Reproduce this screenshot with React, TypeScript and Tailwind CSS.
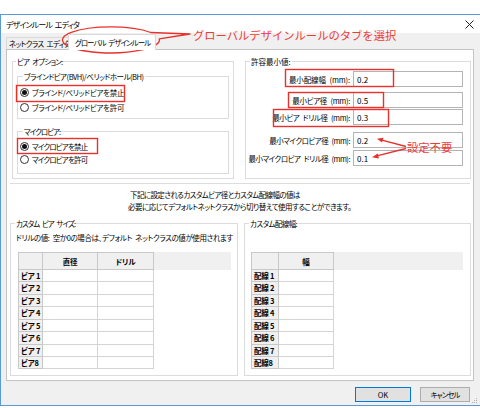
import React from "react";

const RED = "#e8312b";

function Radio({ checked, label, tr }: { checked?: boolean; label: string; tr: string }) {
  return (
    <div className="flex items-center gap-[3px] ml-[2px]">
      <span className="w-[9px] h-[9px] rounded-full border border-[#333] bg-white flex items-center justify-center">
        {checked && <span className="w-[5px] h-[5px] rounded-full bg-[#111]" />}
      </span>
      <span className={tr}>{label}</span>
    </div>
  );
}

function InputRow({ label, value, mt, tr }: { label: string; value: string; mt: string; tr: string }) {
  return (
    <div className={`flex items-center justify-end pr-[7px] ${mt}`}>
      <span className={`mr-[3px] ${tr}`}>{label}</span>
      <div className="w-[110px] h-[16px] border border-[#b4b4b4] bg-white flex items-center pl-[3px] tracking-normal text-[8px]">
        {value}
      </div>
    </div>
  );
}

const rowHeights = ["h-[12px]", "h-[13px]", "h-[12px]", "h-[13px]", "h-[12px]", "h-[13px]", "h-[12px]", "h-[12px]"];

function Grid({
  rowLabels,
  cols,
  rowW,
  colWs,
  extW,
}: {
  rowLabels: string[];
  cols: string[];
  rowW: string;
  colWs: string[];
  extW: string;
}) {
  return (
    <div className="flex flex-col text-[7.5px] font-bold tracking-[-0.2px] [word-spacing:0px]">
      <div className="flex h-[18px]">
        <div className={`${rowW} h-full bg-[#f0f0f0] border border-[#c8c8c8]`} />
        {cols.map((c, i) => (
          <div
            key={c}
            className={`${colWs[i]} h-full bg-[#f0f0f0] border-t border-r border-b border-[#c8c8c8] flex items-center justify-center`}
          >
            {c}
          </div>
        ))}
        <div className={`${extW} h-full bg-[#f0f0f0]`} />
      </div>
      {rowLabels.map((r, ri) => (
        <div key={r} className={`flex ${rowHeights[ri]}`}>
          <div
            className={`${rowW} h-full bg-[#f0f0f0] border-l border-r border-b border-[#c8c8c8] flex items-center pl-[2px] leading-none overflow-hidden`}
          >
            {r}
          </div>
          {cols.map((c, i) => (
            <div key={c} className={`${colWs[i]} h-full bg-white border-r border-b border-[#d4d4d4]`} />
          ))}
        </div>
      ))}
    </div>
  );
}

export default function App() {
  return (
    <div className="relative w-[480px] h-[408px] bg-white overflow-hidden whitespace-nowrap text-black text-[7.5px] leading-[11px] tracking-[-0.4px] [word-spacing:2px] font-['Noto_Sans_CJK_JP',sans-serif] [font-feature-settings:'palt']">
      <div className="h-[14px]" />
      <div className="h-[392px] border-t border-l border-b border-[#5b9bd5] bg-[#f0f0f0] flex flex-col">
        {/* title bar */}
        <div className="h-[18px] bg-white flex items-center justify-between pl-[5px] pr-[6px]">
          <span className="text-[8px] tracking-[-0.9px]">デザインルール エディタ</span>
          <svg width="9" height="9" viewBox="0 0 9 9">
            <path d="M0.5 0.5 L8.5 8.5 M8.5 0.5 L0.5 8.5" stroke="#222" strokeWidth="1" />
          </svg>
        </div>
        {/* tabs */}
        <div className="h-[16px] flex items-end pl-[5px]">
          <div className="w-[62px] h-[12px] bg-[#f0f0f0] border-t border-l border-[#d9d9d9] flex items-center pl-[2px] tracking-[-0.7px]">
            ネットクラス エディタ
          </div>
          <div className="relative z-10 -mb-[1px] w-[88px] h-[16px] bg-white border-t border-l border-r border-[#d9d9d9] flex items-center pl-[6px] tracking-[-1px]">
            グローバル デザインルール
          </div>
        </div>
        {/* panel */}
        <div className="ml-[5px] w-[468px] h-[332px] bg-white border border-[#c4c4c4] flex flex-col">
          {/* top section */}
          <div className="h-[133px] flex pt-[11px] pl-[5px] gap-[11px]">
            {/* via options */}
            <div className="w-[222px] h-[118px] border border-[#dcdcdc] flex flex-col">
              <div className="-mt-[6px] ml-[3px] px-[1px] bg-white w-fit h-[11px] tracking-[-0.8px]">ビア オプション:</div>
              <div className="mt-[9px] ml-[4px] w-[212px] h-[43px] border border-[#dcdcdc] flex flex-col">
                <div className="-mt-[6px] ml-[5px] px-[1px] bg-white w-fit h-[11px] tracking-[-0.5px]">
                  ブラインドビア(BVH)/ベリッドホール(BH)
                </div>
                <div className="mt-[3px] h-[15px] flex items-center">
                  <Radio checked label="ブラインド/ベリッドビアを禁止" tr="tracking-[-0.3px]" />
                </div>
                <div className="h-[15px] flex items-center">
                  <Radio label="ブラインド/ベリッドビアを許可" tr="tracking-[-0.3px]" />
                </div>
              </div>
              <div className="mt-[12px] ml-[4px] w-[212px] h-[43px] border border-[#dcdcdc] flex flex-col">
                <div className="-mt-[6px] ml-[5px] px-[1px] bg-white w-fit h-[11px] tracking-[-1px]">マイクロビア:</div>
                <div className="mt-[3px] h-[13px] flex items-center">
                  <Radio checked label="マイクロビアを禁止" tr="tracking-[-0.85px]" />
                </div>
                <div className="h-[13px] flex items-center">
                  <Radio label="マイクロビアを許可" tr="tracking-[-0.85px]" />
                </div>
              </div>
            </div>
            {/* min values */}
            <div className="w-[226px] h-[118px] border border-[#dcdcdc] flex flex-col">
              <div className="-mt-[6px] ml-[4px] px-[1px] bg-white w-fit h-[11px] tracking-normal">許容最小値:</div>
              <InputRow label="最小配線幅 (mm):" value="0.2" mt="mt-[4px]" tr="tracking-[-0.1px]" />
              <InputRow label="最小ビア径 (mm):" value="0.5" mt="mt-[5px]" tr="tracking-[-0.3px]" />
              <InputRow label="最小ビア ドリル径 (mm):" value="0.3" mt="mt-[1px]" tr="tracking-[-0.4px]" />
              <InputRow label="最小マイクロビア径 (mm):" value="0.2" mt="mt-[7px]" tr="tracking-[-0.5px]" />
              <InputRow label="最小マイクロビア ドリル径 (mm):" value="0.1" mt="mt-[2px]" tr="tracking-[-0.5px]" />
            </div>
          </div>
          <div className="mx-[3px] border-t border-[#dcdcdc]" />
          {/* description */}
          <div className="pt-[5px] pl-[121px] leading-[12px]">
            <div className="tracking-[-0.6px] pl-[2px]">下記に設定されるカスタムビア径とカスタム配線幅の値は</div>
            <div className="tracking-[-0.5px]">必要に応じてデフォルトネットクラスから切り替えて使用することができます。</div>
          </div>
          {/* bottom boxes */}
          <div className="mt-[10px] ml-[3px] flex gap-[6px]">
            <div className="w-[228px] h-[153px] border border-[#dcdcdc] flex flex-col">
              <div className="-mt-[6px] ml-[4px] px-[1px] bg-white w-fit h-[11px] tracking-[-1px]">カスタム ビア サイズ:</div>
              <div className="mt-[3px] ml-[5px] leading-[12px] tracking-[-0.4px]">
                ドリルの値: 空か0の場合は、デフォルト ネットクラスの値が使用されます
              </div>
              <div className="mt-[8px] ml-[7px]">
                <Grid
                  rowLabels={["ビア 1", "ビア 2", "ビア 3", "ビア 4", "ビア 5", "ビア 6", "ビア 7", "ビア8"]}
                  cols={["直径", "ドリル"]}
                  rowW="w-[25px]"
                  colWs={["w-[55px]", "w-[56px]"]}
                  extW="w-[77px]"
                />
              </div>
            </div>
            <div className="w-[227px] h-[153px] border border-[#dcdcdc] flex flex-col">
              <div className="-mt-[6px] ml-[4px] px-[1px] bg-white w-fit h-[11px] tracking-[-0.6px]">カスタム配線幅:</div>
              <div className="mt-[23px] ml-[6px]">
                <Grid
                  rowLabels={["配線 1", "配線 2", "配線 3", "配線 4", "配線 5", "配線 6", "配線 7", "配線8"]}
                  cols={["幅"]}
                  rowW="w-[28px]"
                  colWs={["w-[55px]"]}
                  extW="w-[129px]"
                />
              </div>
            </div>
          </div>
        </div>
        {/* footer */}
        <div className="flex justify-end pt-[6px] pr-[10px] gap-[9px]">
          <div className="w-[56px] h-[15px] border border-[#0078d7] bg-[#e1e1e1] flex items-center justify-center tracking-normal">
            OK
          </div>
          <div className="w-[50px] h-[15px] border border-[#adadad] bg-[#e1e1e1] flex items-center justify-center tracking-[-1px]">
            キャンセル
          </div>
        </div>
      </div>

      {/* annotations */}
      <svg className="absolute left-0 top-0 pointer-events-none" width="480" height="408" viewBox="0 0 480 408">
        <path
          d="M159.3 38.9 A48.5 13 0 1 1 150.7 32.5 L190 34 Z"
          fill="none"
          stroke={RED}
          strokeWidth="1.3"
          strokeLinejoin="round"
        />
        <rect x="16.5" y="85.5" width="108" height="16" fill="none" stroke={RED} strokeWidth="1.4" />
        <rect x="17.5" y="138.5" width="80" height="15" fill="none" stroke={RED} strokeWidth="1.4" />
        <rect x="285.5" y="69.5" width="108" height="17" fill="none" stroke={RED} strokeWidth="1.4" />
        <rect x="288.5" y="92.5" width="95" height="15" fill="none" stroke={RED} strokeWidth="1.4" />
        <rect x="273.5" y="109.5" width="115" height="17" fill="none" stroke={RED} strokeWidth="1.4" />
        <path d="M406 146.5 L381 139.8" stroke={RED} strokeWidth="1.3" />
        <path d="M377 138.8 L383.5 137.8 L382 142.6 Z" fill={RED} />
        <path d="M406 148.5 L376 156.2" stroke={RED} strokeWidth="1.3" />
        <path d="M372 157.2 L377.8 153.6 L378.9 158.4 Z" fill={RED} />
        <g fill="#b0b0b0">
          <rect x="476" y="398" width="1" height="1" />
          <rect x="474" y="400" width="1" height="1" />
          <rect x="476" y="400" width="1" height="1" />
          <rect x="472" y="402" width="1" height="1" />
          <rect x="474" y="402" width="1" height="1" />
          <rect x="476" y="402" width="1" height="1" />
        </g>
      </svg>
      <div className="absolute left-[193px] top-[28px] text-[11.3px] leading-[14px] tracking-normal [word-spacing:0px] text-[#ee3b36] [font-feature-settings:normal]">
        グローバルデザインルールのタブを選択
      </div>
      <div className="absolute left-[407px] top-[140px] text-[11.3px] leading-[14px] tracking-normal [word-spacing:0px] text-[#ee3b36] [font-feature-settings:normal]">
        設定不要
      </div>
    </div>
  );
}
